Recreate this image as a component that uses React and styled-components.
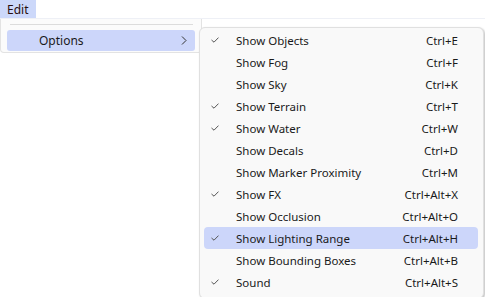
import React from "react";
import styled, { createGlobalStyle } from "styled-components";

const Global = createGlobalStyle`
  html, body { margin: 0; padding: 0; background: #ffffff; }
  body { font-family: "Noto Sans", "Open Sans", sans-serif; font-size: 11.5px; color: #1a1a1a; }
  #root { width: 485px; height: 297px; position: relative; overflow: hidden; }
`;

const Page = styled.div`
  position: relative;
  width: 485px;
  height: 297px;
`;

const MenuBar = styled.div`
  display: flex;
  height: 18px;
  border-bottom: 1px solid #eef0f6;
  background: #ffffff;
`;

const BarItem = styled.div`
  display: flex;
  align-items: center;
  padding: 0 8px 0 7px;
  height: 18px;
  font-size: 12px;
  background: ${(p) => (p.$active ? "#ccd8fa" : "transparent")};
  color: #2a0f0f;
`;

const Dropdown = styled.div`
  position: absolute;
  left: 0;
  top: 19px;
  width: 202px;
  height: 34px;
  box-sizing: border-box;
  background: #fbfbfb;
  border: 1px solid #e3e3e3;
  border-top: none;
  border-radius: 0 0 4px 4px;
  padding: 5px 6px 0 6px;
  display: flex;
  flex-direction: column;
`;

const Separator = styled.div`
  height: 1px;
  margin: 0 2px 5px 3px;
  background: #dcdcdc;
`;

const OptionRow = styled.div`
  display: flex;
  align-items: center;
  height: 21px;
  border-radius: 3px;
  background: #ccd6fa;
  padding-left: 32px;
  padding-right: 8px;
  font-size: 12px;
`;

const Grow = styled.span`
  flex: 1;
`;

const Chevron = styled.svg`
  width: 6px;
  height: 9px;
`;

const Submenu = styled.div`
  position: absolute;
  left: 199px;
  top: 27px;
  width: 285px;
  height: 272px;
  box-sizing: border-box;
  background: #f9f9f9;
  border: 1px solid #e0e0e0;
  border-radius: 6px;
  box-shadow: 1px 1px 2px rgba(0, 0, 0, 0.25);
  padding: 1px 5px 0 4px;
  display: flex;
  flex-direction: column;
`;

const Row = styled.div`
  display: grid;
  grid-template-columns: 32px 1fr auto;
  align-items: center;
  height: 22px;
  border-radius: 4px;
  background: ${(p) => (p.$hover ? "#ccd6fa" : "transparent")};
  padding-right: 20px;
`;

const CheckCell = styled.div`
  display: flex;
  align-items: center;
  padding-left: 7px;
`;

const Label = styled.span`
  white-space: nowrap;
`;

const Shortcut = styled.span`
  white-space: nowrap;
  text-align: right;
`;

const Check = () => (
  <svg width="8" height="6" viewBox="0 0 8 6">
    <polyline points="0.5,3 3,5.2 7.5,0.6" fill="none" stroke="#555" strokeWidth="1" />
  </svg>
);

const items = [
  ["Show Objects", "Ctrl+E", true],
  ["Show Fog", "Ctrl+F", false],
  ["Show Sky", "Ctrl+K", false],
  ["Show Terrain", "Ctrl+T", true],
  ["Show Water", "Ctrl+W", true],
  ["Show Decals", "Ctrl+D", false],
  ["Show Marker Proximity", "Ctrl+M", false],
  ["Show FX", "Ctrl+Alt+X", true],
  ["Show Occlusion", "Ctrl+Alt+O", false],
  ["Show Lighting Range", "Ctrl+Alt+H", true, true],
  ["Show Bounding Boxes", "Ctrl+Alt+B", false],
  ["Sound", "Ctrl+Alt+S", true],
];

export default function App() {
  return (
    <Page>
      <Global />
      <MenuBar>
        <BarItem $active>Edit</BarItem>
      </MenuBar>
      <Dropdown>
        <Separator />
        <OptionRow>
          <Grow>Options</Grow>
          <Chevron viewBox="0 0 6 9">
            <polyline points="1,0.5 5,4.5 1,8.5" fill="none" stroke="#333" strokeWidth="1" />
          </Chevron>
        </OptionRow>
      </Dropdown>
      <Submenu>
        {items.map(([label, sc, checked, hover]) => (
          <Row key={label} $hover={hover}>
            <CheckCell>{checked && <Check />}</CheckCell>
            <Label>{label}</Label>
            <Shortcut>{sc}</Shortcut>
          </Row>
        ))}
      </Submenu>
    </Page>
  );
}
